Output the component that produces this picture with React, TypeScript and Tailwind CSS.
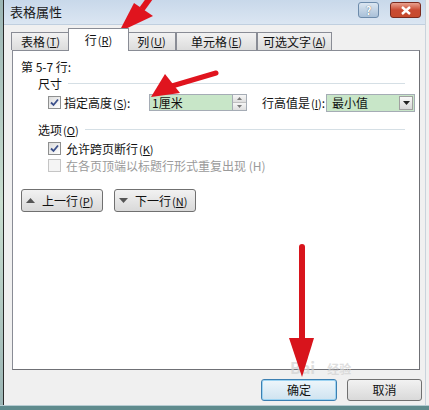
import React from "react";

const font = { fontFamily: '"Noto Sans CJK SC", "Liberation Sans", sans-serif' };

// underlined access key, e.g. (T)
const Key = ({ k }: { k: string }) => (
  <span className="text-[11px] ml-[1px] whitespace-nowrap">
    (<span className="underline underline-offset-1">{k}</span>)
  </span>
);

const Check = ({ checked, disabled }: { checked?: boolean; disabled?: boolean }) => (
  <span
    className={`w-[13px] h-[13px] border flex items-center justify-center shrink-0 ${
      disabled ? "border-[#c5c5c5] bg-[#f4f4f4]" : "border-[#8e8f8f] bg-gradient-to-br from-[#dcdcdc] to-white"
    }`}
  >
    {checked && (
      <svg width="9" height="9" viewBox="0 0 9 9">
        <path d="M1 4.5 L3.5 7 L8 1.5" stroke="#3b4f8a" strokeWidth="1.8" fill="none" />
      </svg>
    )}
  </span>
);

const Tab = ({ label, k, w, active }: { label: string; k: string; w: string; active?: boolean }) => (
  <div
    className={`${w} flex items-center justify-center whitespace-nowrap border border-b-0 border-[#898c95] text-[12px] text-[#111] ${
      active ? "h-[23px] bg-white -mx-[2px] z-10 relative -mb-px" : "h-[18px] bg-gradient-to-b from-[#f2f2f2] to-[#dcdcdc]"
    }`}
  >
    {label}
    <Key k={k} />
  </div>
);

const Sep = ({ label }: { label: React.ReactNode }) => (
  <div className="flex items-center pl-[25px] pr-[14px] h-[13px]">
    <span className="text-[12px] text-[#111] whitespace-nowrap">{label}</span>
    <div className="flex-1 h-px bg-[#d5dfe5] ml-[6px]" />
  </div>
);

export default function App() {
  return (
    <div className="w-[429px] h-[410px] relative overflow-hidden flex flex-col bg-[#f0f0f0]" style={font}>
      <div className="flex flex-1 min-h-0">
        {/* window behind */}
        <div className="w-[3px] bg-gradient-to-b from-[#9bb5b4] via-[#c9ded0] to-[#9bb5b4]" />
        <div className="w-[1px] bg-[#2a2a2a]" />

        <div className="flex-1 flex flex-col">
          {/* title bar */}
          <div className="h-[25px] flex items-center bg-gradient-to-b from-[#c8d8ea] to-[#dbe6f2] border-b border-[#c0cfdf]">
            <span className="pl-[6px] text-[13px] text-[#1a1a1a]">表格属性</span>
            <div className="flex-1" />
            <div className="w-[21px] h-[16px] mb-[4px] rounded-[3px] border border-[#6d8bab] bg-gradient-to-b from-[#dbe6f1] to-[#a9c0d8] flex items-center justify-center text-[11px] font-bold text-white [text-shadow:0_0_1px_#345]">
              ?
            </div>
            <div className="w-[11px]" />
            <div className="w-[31px] h-[16px] mb-[4px] rounded-[3px] border border-[#7a2a1e] bg-gradient-to-b from-[#e8a08e] via-[#c94a32] to-[#c64a2c] flex items-center justify-center">
              <svg width="10" height="9" viewBox="0 0 10 9">
                <path d="M1 1 L9 8 M9 1 L1 8" stroke="white" strokeWidth="2.4" />
              </svg>
            </div>
            <div className="w-[4px]" />
          </div>

          {/* tabs */}
          <div className="pl-[7px] pt-[3px] flex items-end h-[25px]">
            <Tab label="表格" k="T" w="w-[59px]" />
            <Tab label="行" k="R" w="w-[61px]" active />
            <Tab label="列" k="U" w="w-[49px]" />
            <Tab label="单元格" k="E" w="w-[81px]" />
            <Tab label="可选文字" k="A" w="w-[75px]" />
          </div>

          {/* panel */}
          <div className="ml-[8px] w-[408px] h-[320px] bg-white border border-[#898c95] border-r-[#6f7075] border-b-[#6f7075] flex flex-col">
            <div className="pl-[8px] pt-[7px] text-[12px] text-[#111] h-[26px]">第 5-7 行:</div>
            <Sep label="尺寸" />
            <div className="flex items-center h-[17px] mt-[4px] pl-[35px] text-[12px] text-[#111]">
              <Check checked />
              <span className="ml-[3px] w-[85px] whitespace-nowrap">
                指定高度<Key k="S" />:
              </span>
              <div className="w-[84px] h-[17px] border border-[#a5acb5] bg-[#c8e6c8] flex items-center pl-[2px] text-[12px]">
                1厘米
              </div>
              <div className="w-[14px] h-[17px] border border-l-0 border-[#a5acb5] flex flex-col">
                <div className="flex-1 border-b border-[#c0c0c0] bg-gradient-to-b from-[#f6f6f6] to-[#dedede] flex items-center justify-center">
                  <svg width="5" height="3" viewBox="0 0 5 3"><path d="M0 3 L2.5 0 L5 3Z" fill="#7a7a7a" /></svg>
                </div>
                <div className="flex-1 bg-gradient-to-b from-[#f6f6f6] to-[#dedede] flex items-center justify-center">
                  <svg width="5" height="3" viewBox="0 0 5 3"><path d="M0 0 L2.5 3 L5 0Z" fill="#7a7a7a" /></svg>
                </div>
              </div>
              <span className="ml-[15px] w-[64px] shrink-0 whitespace-nowrap">
                行高值是<Key k="I" />:
              </span>
              <div className="w-[89px] h-[18px] border border-[#a5acb5] bg-[#c8e6c8] flex items-center pl-[5px]">
                <span className="flex-1">最小值</span>
                <div className="w-[14px] h-[14px] mr-[1px] border border-[#a0a0a0] bg-gradient-to-b from-[#fafafa] to-[#d8d8d8] flex items-center justify-center">
                  <svg width="7" height="4" viewBox="0 0 7 4"><path d="M0 0 L3.5 4 L7 0Z" fill="#222" /></svg>
                </div>
              </div>
            </div>
            <div className="h-[12px]" />
            <Sep label={<>选项<Key k="O" /></>} />
            <div className="flex items-center h-[13px] mt-[6px] pl-[35px] text-[12px] text-[#111]">
              <Check checked />
              <span className="ml-[5px]">
                允许跨页断行<Key k="K" />
              </span>
            </div>
            <div className="flex items-center h-[13px] mt-[4px] pl-[35px] text-[12px] text-[#9a9a9a]">
              <Check disabled />
              <span className="ml-[5px]">在各页顶端以标题行形式重复出现 (H)</span>
            </div>
            <div className="flex gap-[11px] pl-[8px] mt-[17px]">
              <div className="w-[82px] h-[23px] rounded-[3px] border border-[#707070] bg-gradient-to-b from-[#f2f2f2] to-[#d9d9d9] flex items-center px-[4px] text-[12px] text-[#111] whitespace-nowrap">
                <svg width="9" height="5" viewBox="0 0 9 5"><path d="M0 5 L4.5 0 L9 5Z" fill="#555" /></svg>
                <span className="ml-[7px]">
                  上一行<Key k="P" />
                </span>
              </div>
              <div className="w-[82px] h-[23px] rounded-[3px] border border-[#707070] bg-gradient-to-b from-[#f2f2f2] to-[#d9d9d9] flex items-center px-[4px] text-[12px] text-[#111] whitespace-nowrap">
                <svg width="9" height="5" viewBox="0 0 9 5"><path d="M0 0 L4.5 5 L9 0Z" fill="#555" /></svg>
                <span className="ml-[7px]">
                  下一行<Key k="N" />
                </span>
              </div>
            </div>
          </div>

          {/* footer buttons */}
          <div className="flex justify-end gap-[10px] pr-[3px] pt-[9px]">
            <div className="w-[76px] h-[22px] rounded-[3px] border border-[#3c7fb1] shadow-[inset_0_0_0_1px_#9cd3f2] bg-gradient-to-b from-[#eef6fb] to-[#cfe3f0] flex items-center justify-center text-[12px] text-[#111]">
              确定
            </div>
            <div className="w-[75px] h-[22px] rounded-[3px] border border-[#707070] bg-gradient-to-b from-[#f2f2f2] to-[#d9d9d9] flex items-center justify-center text-[12px] text-[#111]">
              取消
            </div>
          </div>
        </div>
        <div className="w-[4px] bg-[#f0f0f0] border-l border-[#c9d3dc]" />
      </div>
      <div className="h-[5px] bg-[#5f8b8d] border-t border-[#b6ccd2]" />

      {/* watermark */}
      <div className="absolute left-[290px] top-[355px] text-[16px] font-bold text-[#d2d2d2] opacity-70 pointer-events-none">
        Bai<span className="text-[12px] ml-[12px]">经验</span>
      </div>

      {/* red annotation arrows */}
      <svg className="absolute inset-0 pointer-events-none" width="429" height="410" viewBox="0 0 429 410">
        <path d="M142 9 L150 -2" stroke="#e0141e" strokeWidth="6" />
        <path d="M119 32 L134 3 L153 16 Z" fill="#e0141e" />
        <path d="M216 73 L172 86" stroke="#e0141e" strokeWidth="5" strokeLinecap="round" />
        <path d="M151 97 L165 74 L180 93 Z" fill="#e0141e" />
        <path d="M302 247 L302 342" stroke="#d8141c" strokeWidth="6" strokeLinecap="round" />
        <path d="M289 338 L314 338 L302 377 Z" fill="#d8141c" />
      </svg>
    </div>
  );
}
